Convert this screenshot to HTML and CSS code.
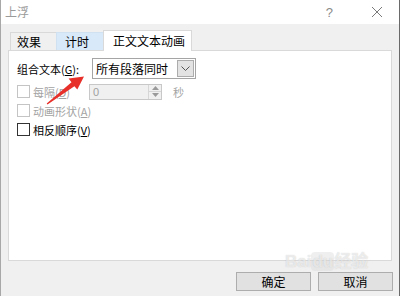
FILE: index.html
```html
<!DOCTYPE html>
<html>
<head>
<meta charset="utf-8">
<link rel="stylesheet" href="styles.css">
</head>
<body>
<div class="window">
  <div class="titlebar">
    <span class="title">上浮</span>
    <span class="help">?</span>
    <svg class="close" width="12" height="12" viewBox="0 0 12 12"><path d="M1 1L11 11M11 1L1 11" stroke="#7a7a7a" stroke-width="1" fill="none"/></svg>
  </div>
  <div class="body">
    <div class="tabs">
      <div class="tab">效果</div>
      <div class="tab hover">计时</div>
      <div class="tab active">正文文本动画</div>
    </div>
    <div class="panel">
      <div class="row r1">
        <span class="lbl">组合文本(<u>G</u>):</span>
        <div class="combo">
          <span class="combo-text">所有段落同时</span>
          <span class="drop"><svg width="9" height="5" viewBox="0 0 9 5"><path d="M0.5 0.5L4.5 4.5L8.5 0.5" stroke="#555" fill="none"/></svg></span>
        </div>
      </div>
      <div class="row dis">
        <span class="cb"></span>
        <span class="cblbl w-d">每隔(<u>D</u>)</span>
        <div class="spin">
          <span class="spin-val">0</span>
          <span class="spin-btns">
            <span class="sb"><svg width="7" height="4" viewBox="0 0 7 4"><path d="M0 4L3.5 0L7 4Z" fill="#9a9a9a"/></svg></span>
            <span class="sb"><svg width="7" height="4" viewBox="0 0 7 4"><path d="M0 0L3.5 4L7 0Z" fill="#9a9a9a"/></svg></span>
          </span>
        </div>
        <span class="unit">秒</span>
      </div>
      <div class="row dis">
        <span class="cb"></span>
        <span class="cblbl">动画形状(<u>A</u>)</span>
      </div>
      <div class="row">
        <span class="cb"></span>
        <span class="cblbl">相反顺序(<u>V</u>)</span>
      </div>
    </div>
    <div class="footer">
      <button class="btn">确定</button>
      <button class="btn">取消</button>
    </div>
  </div>
  <svg class="arrow" width="400" height="296" viewBox="0 0 400 296">
    <polygon points="46.7,103.6 71.5,82.2 68.6,78.6 84,76.5 77.3,89.6 74.4,86.2 47.5,104.6" fill="#e8302a"/>
  </svg>
  <div class="wm">
    <span class="wm-big">Bai<span class="wm-du">du</span>经验</span>
  </div>
</div>
</body>
</html>
```

FILE: styles.css
```css
* { box-sizing: border-box; }
html, body { margin: 0; padding: 0; background: #f0f0f0; }
body {
  font-family: "Noto Sans CJK SC", "Microsoft YaHei", sans-serif;
  font-size: 12px;
  color: #000;
}
.window {
  position: relative;
  width: 400px;
  height: 296px;
  border-left: 1px solid #a8a8a8;
  border-right: 1px solid #6a6a6a;
  overflow: hidden;
}
.titlebar {
  height: 24px;
  background: #fff;
  display: flex;
  align-items: center;
  padding-left: 4px;
}
.title { color: #9a9a9a; font-size: 12px; line-height: 14px; flex: 1; }
.help { color: #8a8a8a; font-family: "Liberation Sans", sans-serif; font-size: 13px; margin-right: 38px; }
.close { margin-right: 16px; }
.body {
  height: 272px;
  background: #f0f0f0;
  padding-top: 6px;
}
.tabs {
  display: flex;
  align-items: flex-end;
  height: 20px;
  margin-left: 9px;
  position: relative;
  z-index: 2;
}
.tab {
  height: 18px;
  border: 1px solid #d9d9d9;
  border-bottom: none;
  background: #f0f0f0;
  font-size: 12px;
  line-height: 17px;
  padding: 0 0 0 6px;
  width: 47px;
}
.tab + .tab { margin-left: -1px; }
.tab.hover { background: #d8eaf9; border-color: #d0e2f2; width: 48px; padding-left: 8px; }
.tab.active {
  background: #fff;
  height: 21px;
  margin-bottom: -1px;
  width: 89px;
  padding-left: 9px;
  line-height: 19px;
}
.panel {
  height: 211px;
  margin: 0 7px;
  background: #fff;
  border: 1px solid #d9d9d9;
  padding: 7px 0 0 8px;
  display: flex;
  flex-direction: column;
  position: relative;
  z-index: 1;
}
.row {
  display: flex;
  align-items: center;
  height: 19px;
  font-size: 11px;
}
.row.r1 { height: 21px; margin-bottom: 3px; }
.lbl { width: 75px; font-size: 11px; }
u { text-decoration: underline; }
.combo {
  width: 104px;
  height: 21px;
  border: 1px solid #a5a5a5;
  background: #fff;
  display: flex;
  align-items: center;
  padding: 0 1px 0 3px;
}
.combo-text { flex: 1; font-size: 12px; line-height: 14px; }
.drop {
  width: 17px;
  height: 17px;
  background: #e3e3e3;
  border: 1px solid #acacac;
  display: flex;
  align-items: center;
  justify-content: center;
}
.cb {
  width: 13px;
  height: 13px;
  border: 1px solid #333;
  background: #fff;
  margin-right: 3px;
}
.dis { color: #a3a3a3; }
.dis .cb { border-color: #c4c4c4; }
.cblbl { line-height: 14px; }
.w-d { width: 56px; }
.spin {
  width: 73px;
  height: 16px;
  border: 1px solid #c8c8c8;
  background: #f0f0f0;
  display: flex;
  align-items: center;
  padding-left: 3px;
}
.spin-val { flex: 1; color: #a0a0a0; font-family: "Liberation Sans", sans-serif; font-size: 11px; }
.spin-btns {
  width: 13px;
  height: 14px;
  display: flex;
  flex-direction: column;
  border-left: 1px solid #d6d6d6;
}
.sb {
  flex: 1;
  display: flex;
  align-items: center;
  justify-content: center;
}
.sb + .sb { border-top: 1px solid #d6d6d6; }
.unit { margin-left: 11px; color: #a3a3a3; }
.footer {
  display: flex;
  justify-content: flex-end;
  gap: 7px;
  margin-top: 11px;
  padding-right: 6px;
}
.btn {
  width: 75px;
  height: 19px;
  border: 1px solid #adadad;
  background: #e1e1e1;
  font-family: "Noto Sans CJK SC", sans-serif;
  font-size: 12px;
  line-height: 15px;
  padding: 0;
  color: #000;
}
.arrow { position: absolute; left: -1px; top: 0; z-index: 5; pointer-events: none; }
.wm {
  position: absolute;
  left: 284px;
  top: 253px;
  z-index: 4;
  color: rgba(255, 255, 255, 0.6);
  pointer-events: none;
}
.wm-big {
  font-family: "Liberation Sans", "Noto Sans CJK SC", sans-serif;
  font-size: 17px;
  font-weight: bold;
  line-height: 18px;
  text-shadow: 0 0 1px rgba(140,140,140,0.45);
}
.wm-du { background: rgba(215,215,215,0.4); border-radius: 4px; padding: 0 1px; }
```
